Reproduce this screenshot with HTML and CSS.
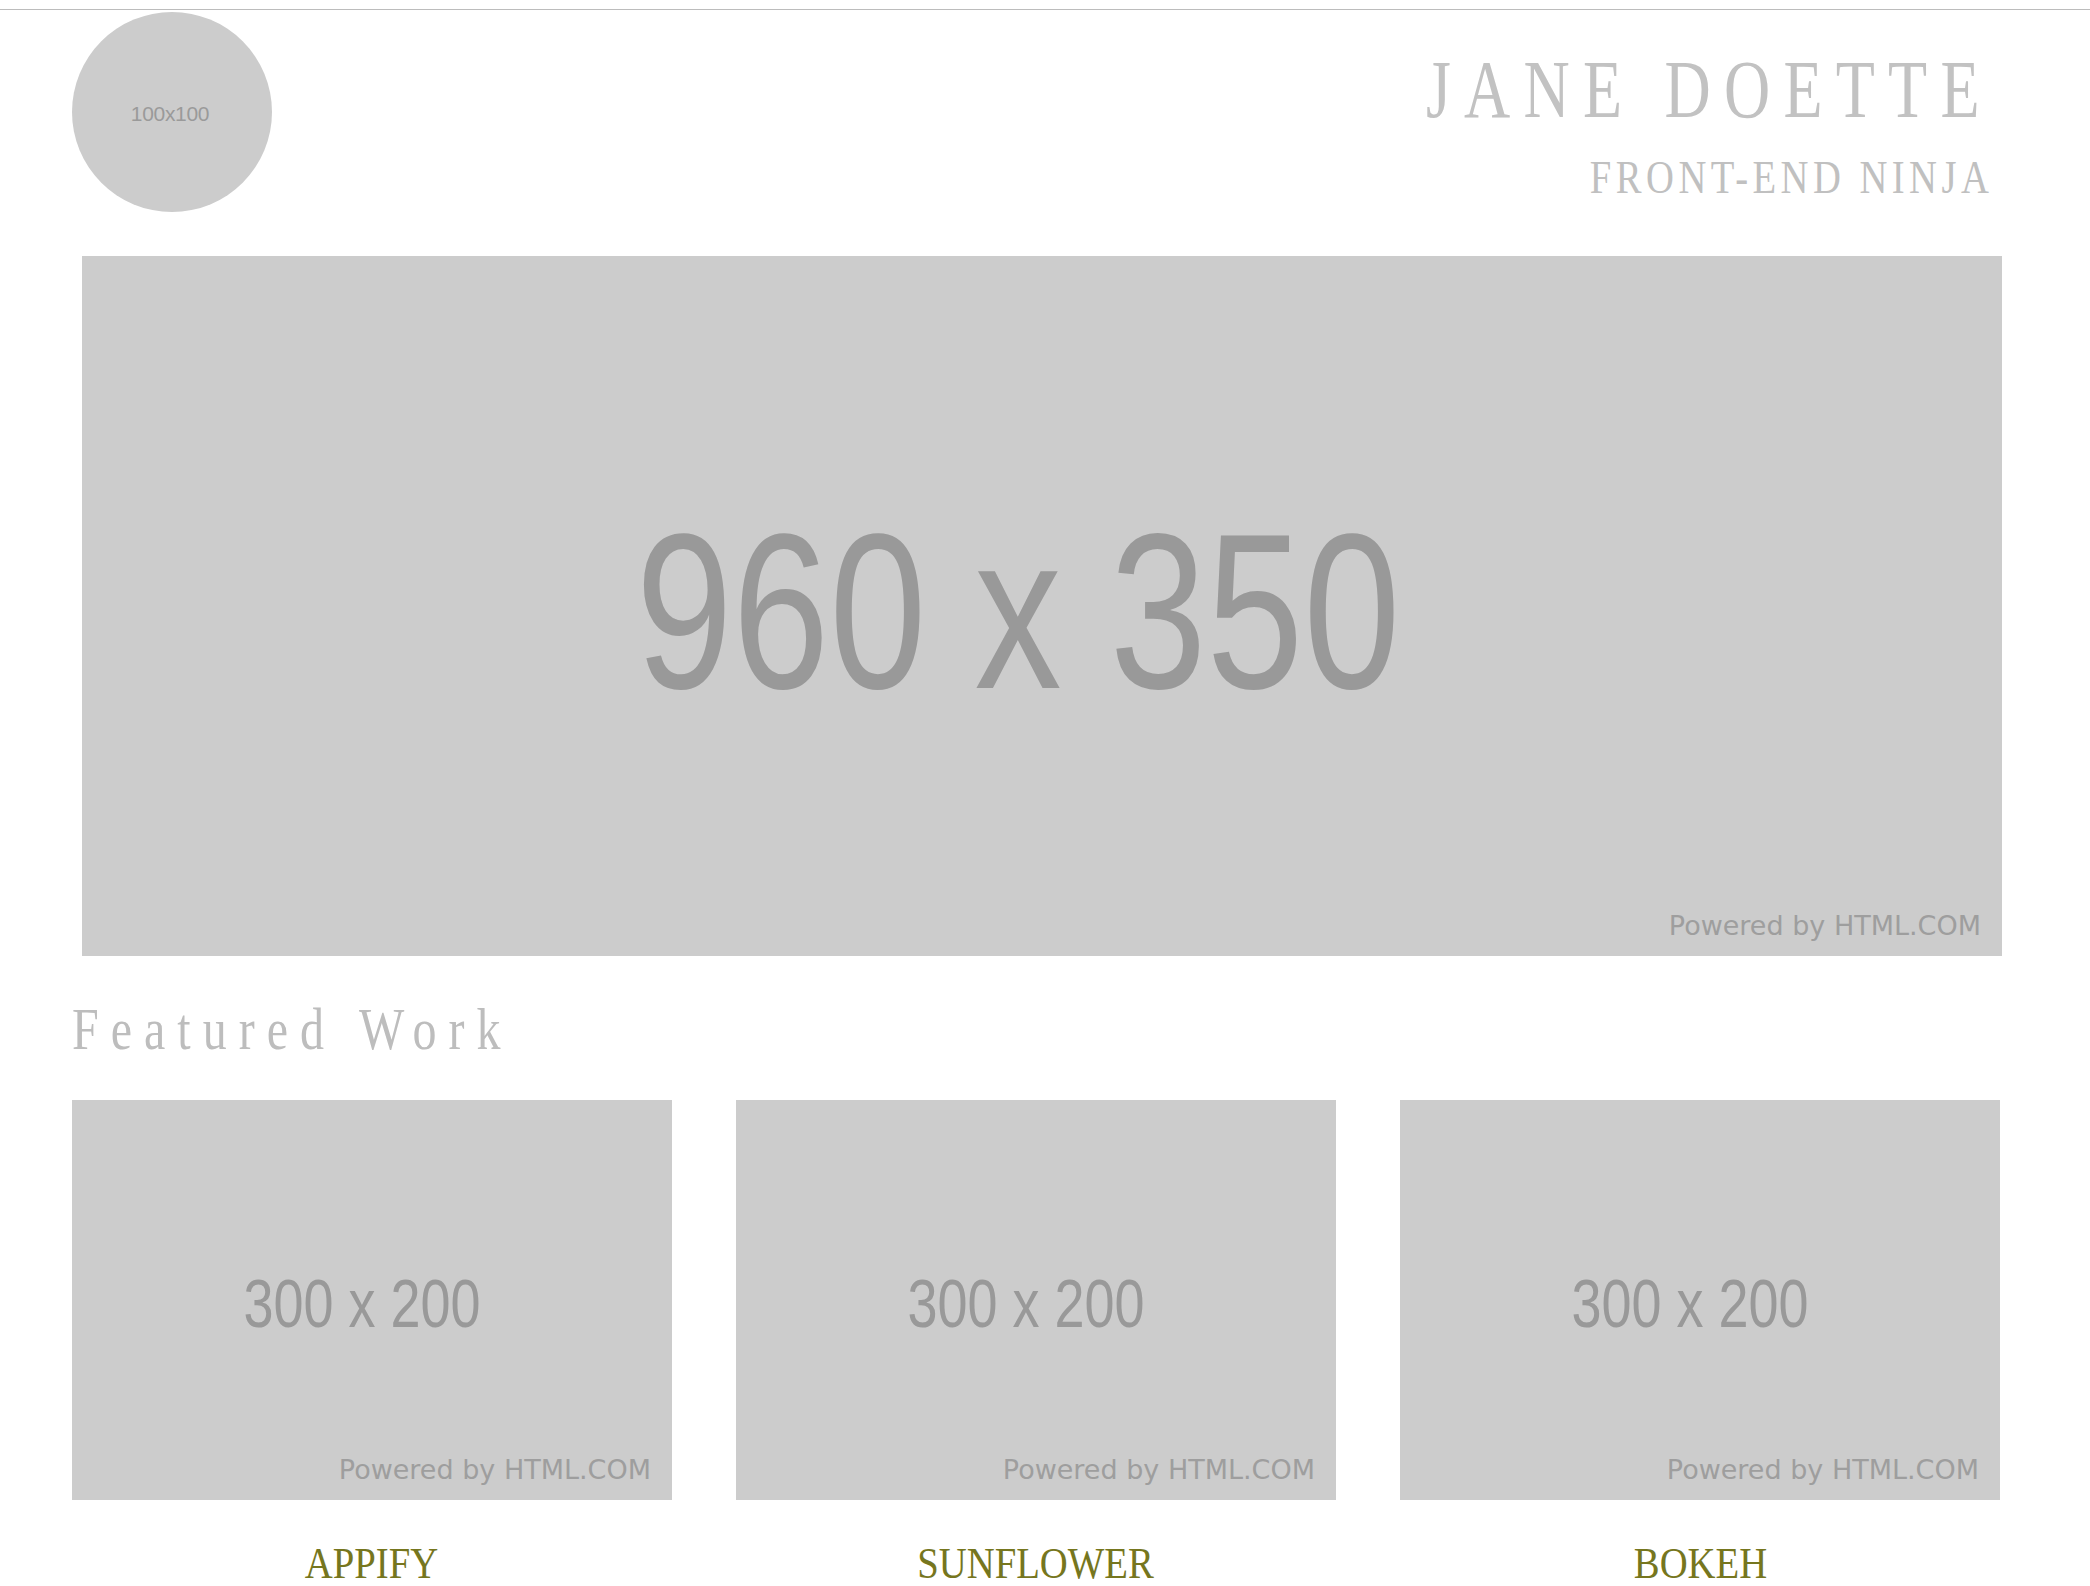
FILE: index.html
```html
<!DOCTYPE html>
<html lang="en">
<head>
<meta charset="utf-8">
<title>Jane Doette — Front-End Ninja</title>
<link rel="stylesheet" href="styles.css">
</head>
<body>
<div class="site">
  <div class="page">
    <header class="header">
      <div class="avatar ph"><span class="avatar-size">100x100</span></div>
      <div class="titles">
        <h1 class="name"><span>JANE DOETTE</span></h1>
        <p class="role"><span>FRONT-END NINJA</span></p>
      </div>
    </header>

    <div class="hero ph">
      <span class="ph-size ph-size-lg">960 x 350</span>
      <span class="ph-credit">Powered by HTML.COM</span>
    </div>

    <h2 class="section-title"><span>Featured Work</span></h2>

    <div class="works">
      <div class="work">
        <div class="thumb ph">
          <span class="ph-size ph-size-sm">300 x 200</span>
          <span class="ph-credit">Powered by HTML.COM</span>
        </div>
        <h3 class="work-title"><span>APPIFY</span></h3>
      </div>
      <div class="work">
        <div class="thumb ph">
          <span class="ph-size ph-size-sm">300 x 200</span>
          <span class="ph-credit">Powered by HTML.COM</span>
        </div>
        <h3 class="work-title"><span>SUNFLOWER</span></h3>
      </div>
      <div class="work">
        <div class="thumb ph">
          <span class="ph-size ph-size-sm">300 x 200</span>
          <span class="ph-credit">Powered by HTML.COM</span>
        </div>
        <h3 class="work-title"><span>BOKEH</span></h3>
      </div>
    </div>
  </div>
</div>
</body>
</html>
```

FILE: styles.css
```css
html, body {
  margin: 0;
  padding: 0;
  background: #ffffff;
}

body {
  font-family: "Liberation Serif", "Times New Roman", serif;
  overflow: hidden;
}

.site {
  margin-top: 9px;
  border-top: 1px solid #bcbcbc;
}

.page {
  width: 1930px;
  margin-left: 72px;
}

/* ---------- header ---------- */
.header {
  display: flex;
  justify-content: space-between;
  align-items: flex-start;
  padding-top: 2px;
}

.avatar {
  width: 200px;
  height: 200px;
  border-radius: 50%;
}

.avatar-size {
  font-family: "Liberation Sans", Arial, sans-serif;
  font-size: 21px;
  line-height: 1;
  letter-spacing: -0.3px;
  color: #9a9a9a;
  margin-right: 4px;
  margin-top: 2px;
}

.titles {
  text-align: right;
  padding-top: 37px;
  padding-right: 9px;
}

.name {
  margin: 0;
  font-weight: 400;
  font-size: 82px;
  line-height: 1;
  letter-spacing: 17px;
  color: #c2c2c2;
}

.name span {
  display: inline-block;
  transform: scaleX(0.78);
  transform-origin: right center;
}

.role {
  margin: 24px 0 0;
  font-size: 46px;
  line-height: 1;
  letter-spacing: 5.3px;
  color: #c0c0c0;
}

.role span {
  display: inline-block;
  transform: scaleX(0.84);
  transform-origin: right center;
}

/* ---------- placeholders ---------- */
.ph {
  position: relative;
  background: #cccccc;
  display: flex;
  align-items: center;
  justify-content: center;
  font-family: "Liberation Sans", Arial, sans-serif;
  color: #999999;
}

.ph-size {
  display: inline-block;
  line-height: 1;
  white-space: nowrap;
}

.ph-size-lg {
  font-size: 174px;
  transform: scaleY(1.27);
  margin-right: 48px;
  margin-top: 12px;
}

.ph-size-sm {
  font-size: 54px;
  transform: scaleY(1.27);
  margin-right: 20px;
  margin-top: 6px;
}

.ph-credit {
  position: absolute;
  right: 21px;
  bottom: 17px;
  font-family: "DejaVu Sans", Verdana, sans-serif;
  font-size: 27px;
  line-height: 1;
  color: #9e9e9e;
  white-space: nowrap;
}

.hero {
  width: 1920px;
  height: 700px;
  margin: 44px 0 0 10px;
}

/* ---------- featured work ---------- */
.section-title {
  margin: 43px 0 0;
  font-weight: 400;
  font-size: 60px;
  line-height: 1;
  letter-spacing: 15px;
  color: #bdbdbd;
}

.section-title span {
  display: inline-block;
  transform: scaleX(0.8);
  transform-origin: left center;
}

.works {
  display: grid;
  grid-template-columns: repeat(3, 600px);
  column-gap: 64px;
  margin-top: 41px;
}

.thumb {
  width: 600px;
  height: 400px;
}

.work-title {
  margin: 41px 0 0;
  font-weight: 400;
  font-size: 45px;
  line-height: 1;
  text-align: center;
  color: #76761e;
}

.work-title span {
  display: inline-block;
  transform: scaleX(0.86);
  transform-origin: center center;
}
```
